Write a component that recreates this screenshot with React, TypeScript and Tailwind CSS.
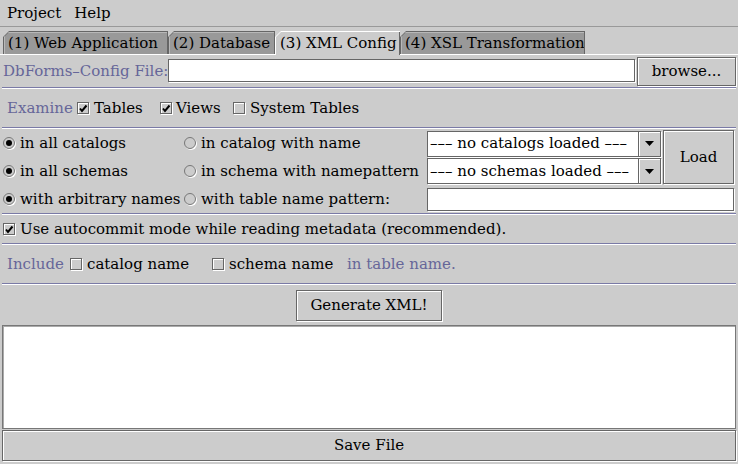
import React from "react";

const Check = ({ checked }: { checked?: boolean }) => (
  <span className="w-[12px] h-[12px] shrink-0 border border-[#666666] bg-[#cccccc] shadow-[1px_1px_0_#ffffff,inset_1px_1px_0_#ffffff] flex items-center justify-center">
    {checked && (
      <svg width="10" height="10" viewBox="0 0 10 10">
        <path d="M2 5.5 L4 8 L8.5 2.5" fill="none" stroke="#000" strokeWidth={2} />
      </svg>
    )}
  </span>
);

const Radio = ({ selected }: { selected?: boolean }) => (
  <span className="w-[12px] h-[12px] shrink-0 rounded-full border border-[#777777] bg-[#cccccc] shadow-[1px_1px_0_#ffffff] flex items-center justify-center">
    {selected && <span className="w-[6px] h-[6px] rounded-full bg-black" />}
  </span>
);

const Tab = ({ label, width, active }: { label: string; width: string; active?: boolean }) =>
  active ? (
    <div
      className={`${width} h-[24px] -mb-px relative z-10 bg-white pt-px pl-px [clip-path:polygon(6px_0,100%_0,100%_100%,0_100%,0_6px)]`}
    >
      <div className="h-full bg-[#cccccc] border-r border-[#666666] flex items-center pl-[4px] whitespace-nowrap [clip-path:polygon(5px_0,100%_0,100%_100%,0_100%,0_5px)]">
        {label}
      </div>
    </div>
  ) : (
    <div
      className={`${width} h-[23px] bg-[#666666] pt-px pl-px pr-px [clip-path:polygon(6px_0,100%_0,100%_100%,0_100%,0_6px)]`}
    >
      <div className="h-full bg-[#999999] shadow-[inset_1px_1px_0_#b8b8b8] flex items-center pl-[4px] whitespace-nowrap [clip-path:polygon(5px_0,100%_0,100%_100%,0_100%,0_5px)]">
        {label}
      </div>
    </div>
  );

const Separator = () => <div className="h-[2px] border-t border-[#7a7aa6] border-b border-b-white" />;

const Combo = ({ text }: { text: string }) => (
  <div className="h-[26px] flex border border-[#666666] shadow-[1px_1px_0_#ffffff] bg-white">
    <div className="flex-1 flex items-center pl-[2px] whitespace-nowrap overflow-hidden">{text}</div>
    <div className="w-[22px] bg-[#cccccc] border-l border-[#666666] shadow-[inset_1px_1px_0_#ffffff] flex items-center justify-center">
      <svg width="9" height="5" viewBox="0 0 9 5">
        <path d="M0 0 H9 L4.5 5 Z" fill="#000" />
      </svg>
    </div>
  </div>
);

const btn =
  "bg-[#cccccc] border border-[#666666] shadow-[inset_1px_1px_0_#ffffff,1px_1px_0_#ffffff] flex items-center justify-center";

export default function App() {
  return (
    <div className="w-[738px] h-[464px] bg-[#cccccc] text-black text-[15px] leading-none font-['DejaVu_Serif',serif] flex flex-col overflow-hidden">
      {/* menu bar */}
      <div className="h-[27px] shrink-0 flex items-center gap-[13px] pl-[7px] border-b border-[#999999]">
        <span>Project</span>
        <span>Help</span>
      </div>

      {/* tabs */}
      <div className="h-[27px] shrink-0 pt-[4px] pl-[3px] flex items-end">
        <Tab label="(1) Web Application" width="w-[165px]" />
        <Tab label="(2) Database" width="w-[107px]" />
        <Tab label="(3) XML Config" width="w-[125px]" active />
        <Tab label="(4) XSL Transformation" width="w-[185px]" />
      </div>

      <div className="flex-1 flex flex-col border-t border-white px-[2px] pb-[3px]">
        {/* config file */}
        <div className="h-[32px] shrink-0 flex items-center pl-[1px]">
          <span className="text-[#666699] whitespace-nowrap">DbForms–Config File:</span>
          <div className="flex-1 h-[23px] mb-[1px] bg-white border border-[#666666] shadow-[1px_1px_0_#ffffff]" />
          <div className={`${btn} w-[99px] h-[29px] ml-[2px] mt-[1px]`}>browse...</div>
        </div>
        <Separator />

        {/* examine */}
        <div className="h-[38px] shrink-0 flex items-center pl-[5px]">
          <span className="text-[#666699] w-[70px]">Examine</span>
          <div className="w-[83px] flex items-center gap-[5px]">
            <Check checked />
            <span>Tables</span>
          </div>
          <div className="w-[73px] flex items-center gap-[4px]">
            <Check checked />
            <span>Views</span>
          </div>
          <div className="flex items-center gap-[5px]">
            <Check />
            <span>System Tables</span>
          </div>
        </div>
        <Separator />

        {/* catalog / schema selection */}
        <div className="h-[84px] shrink-0 pl-[1px] grid grid-cols-[181px_243px_234px_74px] grid-rows-[28px_28px_28px]">
          <div className="flex items-center gap-[5px]">
            <Radio selected />
            <span>in all catalogs</span>
          </div>
          <div className="flex items-center gap-[5px]">
            <Radio />
            <span>in catalog with name</span>
          </div>
          <div className="flex items-center pt-[1px]">
            <div className="w-full">
              <Combo text="––– no catalogs loaded –––" />
            </div>
          </div>
          <div className="row-span-2 pl-[2px] pt-[1px] pb-[1px]">
            <div className={`${btn} h-[54px] w-[71px]`}>Load</div>
          </div>

          <div className="flex items-center gap-[5px]">
            <Radio selected />
            <span>in all schemas</span>
          </div>
          <div className="flex items-center gap-[5px]">
            <Radio />
            <span className="whitespace-nowrap">in schema with namepattern</span>
          </div>
          <div className="flex items-center">
            <div className="w-full">
              <Combo text="––– no schemas loaded –––" />
            </div>
          </div>

          <div className="flex items-center gap-[5px]">
            <Radio selected />
            <span className="whitespace-nowrap">with arbitrary names</span>
          </div>
          <div className="flex items-center gap-[5px]">
            <Radio />
            <span className="whitespace-nowrap">with table name pattern:</span>
          </div>
          <div className="col-span-2 flex items-center pr-[1px]">
            <div className="w-full h-[23px] bg-white border border-[#666666] shadow-[1px_1px_0_#ffffff]" />
          </div>
        </div>
        <Separator />

        {/* autocommit */}
        <div className="h-[28px] shrink-0 flex items-center gap-[5px] pl-[1px]">
          <Check checked />
          <span>Use autocommit mode while reading metadata (recommended).</span>
        </div>
        <Separator />

        {/* include */}
        <div className="h-[38px] shrink-0 flex items-center pl-[5px]">
          <span className="text-[#666699] w-[63px]">Include</span>
          <div className="w-[142px] flex items-center gap-[5px]">
            <Check />
            <span>catalog name</span>
          </div>
          <div className="w-[135px] flex items-center gap-[5px]">
            <Check />
            <span>schema name</span>
          </div>
          <span className="text-[#666699]">in table name.</span>
        </div>
        <Separator />

        {/* generate */}
        <div className="h-[40px] shrink-0 flex items-center justify-center">
          <div className={`${btn} w-[146px] h-[31px] mt-[1px]`}>Generate XML!</div>
        </div>

        {/* output */}
        <div className="flex-1 bg-white border border-[#777777] shadow-[inset_1px_1px_0_#aaaaaa]" />
        <div className={`${btn} h-[31px] mt-[1px]`}>Save File</div>
      </div>
    </div>
  );
}
